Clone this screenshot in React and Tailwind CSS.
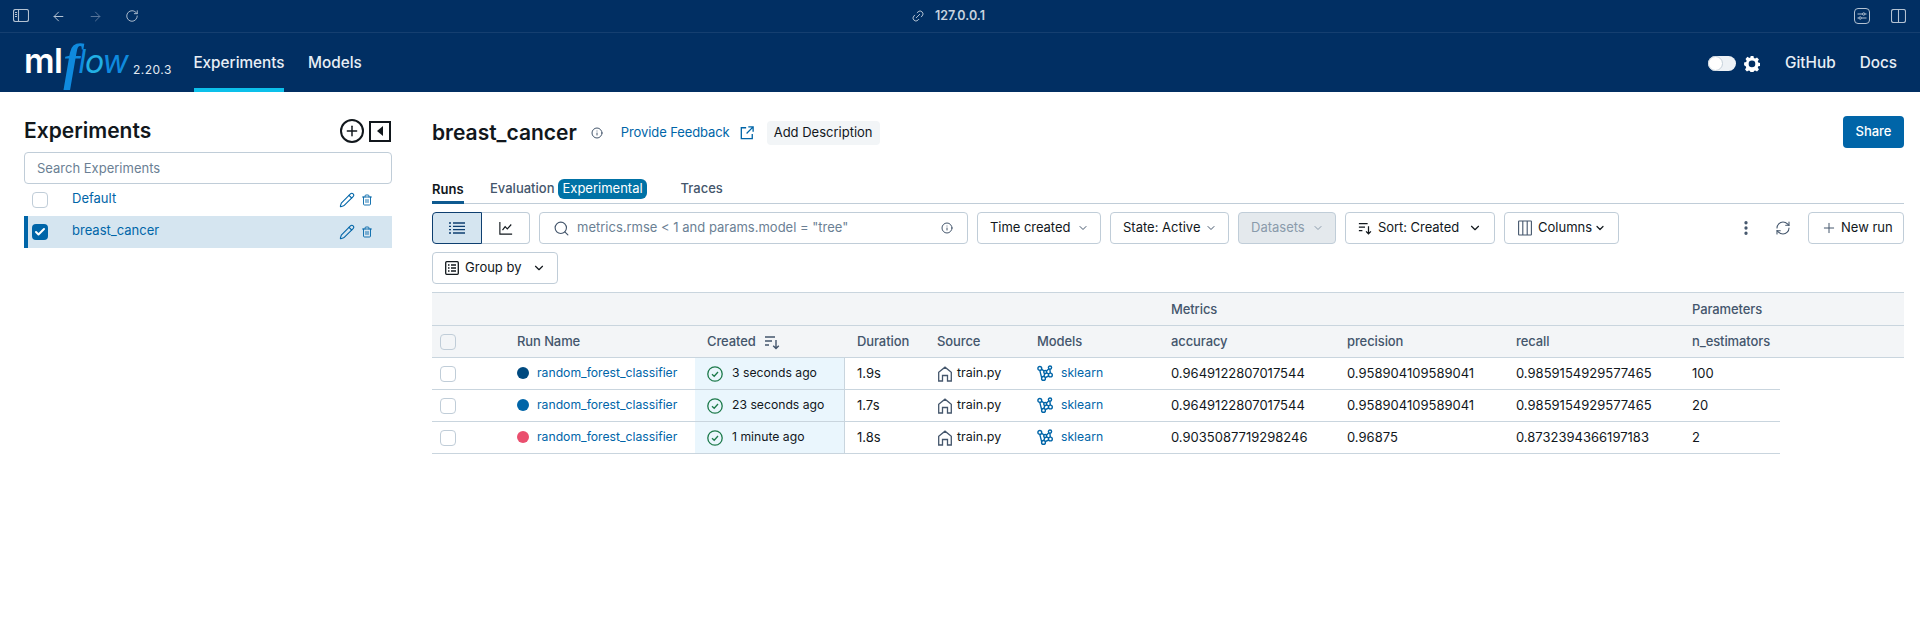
import {
  ArrowLeft, ArrowRight, RotateCw, Link2, Info, Search, ChevronDown, Pencil, Trash2, Plus,
  EllipsisVertical, RefreshCw, Check,
} from "lucide-react";

const rows = [
  {color: "bg-[#004a80]", ago: "3 seconds ago", dur: "1.9s", acc: "0.9649122807017544", prec: "0.958904109589041", rec: "0.9859154929577465", n: "100"},
  {color: "bg-[#0065a8]", ago: "23 seconds ago", dur: "1.7s", acc: "0.9649122807017544", prec: "0.958904109589041", rec: "0.9859154929577465", n: "20"},
  {color: "bg-[#ea4f6e]", ago: "1 minute ago", dur: "1.8s", acc: "0.9035087719298246", prec: "0.96875", rec: "0.8732394366197183", n: "2"},
];

function SortIcon({className}) {
  return <svg viewBox="0 0 16 16" fill="none" stroke="currentColor" strokeWidth="1.4" className={className}>
    <path d="M1 3h10M1 7h7M1 11h4M12 6v8.5M9.2 11.8l2.8 2.8 2.8-2.8"/>
  </svg>;
}

function ModelIcon() {
  return <svg viewBox="0 0 16 16" fill="none" stroke="#0065a8" strokeWidth="1.4" className="w-4 h-4 shrink-0">
    <circle cx="2.8" cy="3.4" r="1.9"/>
    <circle cx="13" cy="2.6" r="1.6"/>
    <circle cx="13.400" cy="10" r="1.9"/>
    <circle cx="6.500" cy="13.400" r="1.900"/>
    <circle cx="8.200" cy="7" r="1.500"/>
    <path d="M4.600 4.200l2.300 1.700M9.500 6l2.400-2.300M9.600 7.800l2.300 1.300M7.800 8.500l-.9 3M4.700 12.800L2.800 5.300M8.200 12.700l3.500-1.700M12.900 4.200l.4 3.900"/>
  </svg>;
}

function HomeIcon() {
  return <svg viewBox="0 0 16 16" fill="none" stroke="#44566c" strokeWidth="1.3" className="w-4 h-4 shrink-0">
    <path d="M1.700 15V6.200L8 1.200l6.300 5V15h-3.800V9.500H5.500V15z"/>
  </svg>;
}

function Btn({children, className = ""}) {
  return <div className={`h-8 flex items-center border border-[#c0cdd8] rounded text-[13px] text-[#11171c] bg-white ${className}`}>
    {children}
  </div>;
}

function Check2({checked}) {
  if (checked) {
    return <div className="w-4 h-4 rounded-[4px] bg-[#0065a8] flex items-center justify-center">
      <Check className="w-3 h-3 text-white" strokeWidth={4}/>
    </div>;
  }
  return <div className="w-4 h-4 rounded-[4px] border border-[#c0cdd8] bg-white"></div>;
}

function ExperimentRow({name, selected}) {
  return <div className={`h-8 flex items-center ${selected ? "bg-[#d5e5f0] border-l-4 border-[#0065a8] pl-1" : "pl-2"}`}>
    <Check2 checked={selected}/>
    <span className="ml-6 text-[13px] text-[#0065a8] -mt-[3px]">{name}</span>
    <div className="ml-auto flex items-center gap-[6px] pr-[19px] text-[#0065a8]">
      <Pencil className="w-4 h-4" strokeWidth={1.6}/>
      <Trash2 className="w-3 h-[14px]" strokeWidth={1.8}/>
    </div>
  </div>;
}

function HeadCell({width, children, className = ""}) {
  return <div className={`${width} px-3 flex items-center gap-2 text-[13px] font-medium tracking-[-0.1px] text-[#44566c] ${className}`}>{children}</div>;
}

export default function App() {
  return <div className="min-h-[637px] bg-white font-['Inter',sans-serif] text-[#11171c]">
    {/* safari bar */}
    <div className="h-[33px] bg-[#012f63] border-b border-[#153f70] relative flex items-center text-[#b4c2d2]">
      <div className="flex items-center pl-[13px]">
        <svg viewBox="0 0 16 14" fill="none" stroke="currentColor" strokeWidth="1.1" className="w-4 h-[14px]">
          <rect x="0.5" y="0.5" width="15" height="12" rx="2"/>
          <path d="M5.500 1v11M2 3.500h2M2 5.500h2M2 7.500h2"/>
        </svg>
        <ArrowLeft className="w-[15px] h-[15px] ml-[22px]" strokeWidth={1.6}/>
        <ArrowRight className="w-[15px] h-[15px] ml-[22px] text-[#58759a]" strokeWidth={1.6}/>
        <RotateCw className="w-[14px] h-[14px] ml-[22px]" strokeWidth={1.6}/>
      </div>
      <div className="absolute left-[911px] top-[7px] flex items-center gap-[10px]">
        <Link2 className="w-[14px] h-[14px] -rotate-45" strokeWidth={1.6}/>
        <span className="text-[12.500px] font-semibold text-[#c7d2df]">127.0.0.1</span>
      </div>
      <div className="ml-auto flex items-center pr-[14px] gap-[21px]">
        <svg viewBox="0 0 16 16" fill="none" stroke="currentColor" strokeWidth="1" className="w-4 h-4">
          <rect x="0.5" y="0.500" width="15" height="15" rx="3.500"/>
          <path d="M3.500 6h5M11 6h1.500M3.500 10h1.500M7.500 10h5"/>
          <circle cx="9.700" cy="6" r="1.200"/>
          <circle cx="6.200" cy="10" r="1.200"/>
        </svg>
        <svg viewBox="0 0 15 14" fill="none" stroke="currentColor" strokeWidth="1.100" className="w-[15px] h-[14px]">
          <rect x="0.500" y="0.500" width="14" height="13" rx="2"/>
          <path d="M7.500 1v12"/>
        </svg>
      </div>
    </div>

    {/* nav */}
    <div className="h-[59px] bg-[#012f63] flex items-stretch pl-6 pr-[23px] text-white">
      <div className="w-[170px] flex items-center relative">
        <span className="text-[34px] font-semibold leading-none tracking-[-0.5px] mb-[3px]">ml</span>
        <span className="font-['Liberation_Serif'] text-[50px] italic font-bold leading-none text-[#0f8ade] ml-[1px] -mt-[2px]">f</span>
        <span className="text-[32px] italic leading-none text-[#0f8ade] mb-[2px] -ml-[2px] tracking-[-1px]">l<span className="text-[#22b0e4]">o</span>w</span>
        <span className="absolute left-[109px] top-[28px] text-[12px] text-[#e4ebf2] tracking-[0.5px]">2.20.3</span>
      </div>
      <div className="flex items-stretch gap-6 text-[15.300px] font-medium text-[#e8eef5]">
        <div className="w-[90px] flex items-center justify-center border-b-4 border-[#0cc0ea] pt-[6px]">Experiments</div>
        <div className="flex items-center pt-[2px]">Models</div>
      </div>
      <div className="ml-auto flex items-center gap-[24px] text-[15.300px] text-[#e8eef5] font-medium pt-[2px]">
        <div className="flex items-center gap-2">
          <div className="w-7 h-[15px] rounded-full bg-[#eef2f6] relative">
            <div className="absolute left-0 top-0 w-[15px] h-[15px] rounded-full bg-white border border-[#c5d0da]"></div>
          </div>
          <svg viewBox="0 0 16 16" className="w-4 h-4" fill="white">
            <path fillRule="evenodd" d="M6.500 0h3l.5 2.200 1.300.6 2-1.100 2 2.200-1.200 1.900.5 1.300 2.200.5v3l-2.200.5-.5 1.300 1.200 1.900-2 2.200-2-1.100-1.300.6-.5 2.200h-3l-.5-2.200-1.300-.6-2 1.100-2-2.200 1.200-1.900-.5-1.300L-.300 10V7l2.200-.5.5-1.300L1.200 3.300l2-2.200 2 1.100 1.300-.6zM8 5a3.500 3.500 0 100 7 3.500 3.500 0 000-7z" transform="scale(.95) translate(.4 -.2)"/>
          </svg>
        </div>
        <span className="ml-[1px]">GitHub</span>
        <span>Docs</span>
      </div>
    </div>

    <div className="flex">
      {/* sidebar */}
      <div className="w-[432px] shrink-0 pl-6 pr-[40px] pt-[21px]">
        <div className="flex items-center h-9 mb-[3px]">
          <h1 className="text-[21px] font-semibold">Experiments</h1>
          <div className="ml-auto flex items-center gap-[5px] pr-px text-[#11171c]">
            <div className="w-6 h-6 rounded-full border-2 border-[#11171c] flex items-center justify-center">
              <Plus className="w-4 h-4" strokeWidth={2.2}/>
            </div>
            <div className="w-[22px] h-[21px] border-2 border-[#11171c] flex items-center justify-center">
              <div className="w-0 h-0 border-y-[5px] border-y-transparent border-r-[6px] border-r-[#11171c]"></div>
            </div>
          </div>
        </div>
        <div className="h-8 border border-[#c0cdd8] rounded flex items-center px-3 text-[13px] text-[#6b7f94] pt-px">Search Experiments</div>
        <ExperimentRow name="Default"/>
        <ExperimentRow name="breast_cancer" selected/>
      </div>

      {/* main */}
      <div className="flex-1 pr-4">
        <div className="flex items-center h-8 mt-6">
          <h2 className="text-[21px] font-semibold mt-[2px]">breast_cancer</h2>
          <Info className="w-3 h-3 ml-[14px] mt-[2px] text-[#44566c]" strokeWidth={2}/>
          <span className="ml-[18px] mt-[2px] text-[13px] text-[#0065a8] tracking-[-0.1px]">Provide Feedback</span>
          <svg viewBox="0 0 16 16" fill="none" stroke="#0065a8" strokeWidth="1.500" className="w-[14px] h-[14px] ml-[10px] mt-[2px]">
            <path d="M7 2H1.500v12.500H14V9M9.500 1H15v5.500M15 1L7.500 8.500"/>
          </svg>
          <div className="ml-[13px] mt-[2px] h-6 w-[113px] justify-center rounded bg-[#f2f5f7] flex items-center text-[13px]">Add Description</div>
          <div className="ml-auto h-8 w-[61px] rounded bg-[#0065a8] text-white text-[13px] font-medium flex items-center justify-center">Share</div>
        </div>

        <div className="flex items-end h-[56px] border-b border-[#c0cdd8] mb-[8px] text-[13px] font-medium text-[#44566c]">
          <div className="h-[24px] w-8 text-[#11171c] font-semibold border-b-[3px] border-[#0e5a90] -mb-px">Runs</div>
          <div className="h-[24px] ml-[26px]">Evaluation</div>
          <div className="h-5 ml-1 mb-1 px-1 rounded-md bg-[#0072a6] text-white flex items-center font-normal">Experimental</div>
          <div className="h-[24px] ml-[34px]">Traces</div>
        </div>

        <div className="flex gap-[9px]">
          <div className="flex shrink-0">
            <div className="w-[50px] h-8 bg-[#d5e5f0] border border-[#0e3f70] rounded-l flex items-center justify-center">
              <svg viewBox="0 0 16 12" fill="none" stroke="#0e3f70" strokeWidth="1.300" className="w-4 h-3">
                <path d="M0 1h2M4 1h12M0 4.300h2M4 4.300h12M0 7.600h2M4 7.600h12M0 11h2M4 11h12"/>
              </svg>
            </div>
            <div className="w-[48px] h-8 border border-l-0 border-[#c0cdd8] rounded-r flex items-center justify-center">
              <svg viewBox="0 0 16 16" fill="none" stroke="#11171c" strokeWidth="1.300" className="w-[14px] h-[14px]">
                <path d="M1 1v14h14M4 10.500l3-4 2.500 2.500L14 4"/>
              </svg>
            </div>
          </div>
          <Btn className="w-[429px] pl-[13px] pr-3 shrink-0">
            <Search className="w-[17px] h-[17px] text-[#44566c] mr-[7px]" strokeWidth={1.600}/>
            <span className="text-[#6b7f94]">metrics.rmse &lt; 1 and params.model = "tree"</span>
            <Info className="w-3 h-3 ml-auto mr-[2px] text-[#44566c]" strokeWidth={2}/>
          </Btn>
          <Btn className="w-[124px] shrink-0 pl-3 justify-between pr-[11px] tracking-[-0.05px]">Time created <ChevronDown className="w-3 h-3 text-[#44566c]" strokeWidth={2}/></Btn>
          <Btn className="w-[119px] shrink-0 pl-3 justify-between pr-[11px]">State: Active <ChevronDown className="w-3 h-3 text-[#44566c]" strokeWidth={2}/></Btn>
          <Btn className="w-[98px] shrink-0 pl-3 justify-between pr-[11px] bg-[#e4e9ed]! text-[#8a9bab]!">Datasets <ChevronDown className="w-3 h-3 text-[#8a9bab]" strokeWidth={2}/></Btn>
          <Btn className="w-[150px] shrink-0 pl-3 justify-between pr-[12px] tracking-[-0.05px]">
            <span className="flex items-center gap-[6px]"><SortIcon className="w-[14px] h-[14px]"/>Sort: Created</span>
            <ChevronDown className="w-[14px] h-[14px]" strokeWidth={2}/>
          </Btn>
          <Btn className="w-[115px] shrink-0 pl-[13px] gap-[6px]">
            <svg viewBox="0 0 14 16" fill="none" stroke="#44566c" strokeWidth="1.100" className="w-[14px] h-4">
              <rect x="0.600" y="1" width="12.800" height="14" rx="0.500"/><path d="M4.800 1v14M9.200 1v14"/>
            </svg>
            <span className="flex items-center gap-[2px]">Columns <ChevronDown className="w-3 h-3" strokeWidth={2.400}/></span>
          </Btn>
          <div className="ml-auto flex items-center gap-[20px] text-[#44566c]">
            <EllipsisVertical className="w-[18px] h-[18px]" strokeWidth={2.400}/>
            <RefreshCw className="w-4 h-4" strokeWidth={1.600}/>
            <Btn className="w-[96px] pl-[12px] gap-1 -ml-[3px]"><Plus className="w-4 h-4 text-[#44566c]" strokeWidth={1.500}/>New run</Btn>
          </div>
        </div>

        <Btn className="w-[126px] mt-2 pl-3 gap-[6px]">
          <svg viewBox="0 0 14 14" fill="none" stroke="#11171c" strokeWidth="1.300" className="w-[14px] h-[14px]">
            <rect x="0.700" y="0.700" width="12.600" height="12.600" rx="1"/><path d="M3 4h1.500M6 4h5M3 7h1.500M6 7h5M3 10h1.500M6 10h5"/>
          </svg>
          Group by
          <ChevronDown className="w-[14px] h-[14px] ml-1" strokeWidth={2}/>
        </Btn>

        {/* table */}
        <div className="mt-2 border-t border-[#c9d5de]">
          <div className="h-[32px] bg-[#f3f5f7] flex items-center border-b border-[#c9d5de] box-content">
            <HeadCell width="w-[727px] shrink-0"></HeadCell>
            <HeadCell width="w-[521px] shrink-0 pt-[2px]">Metrics</HeadCell>
            <HeadCell width="w-[200px] pt-[2px]">Parameters</HeadCell>
          </div>
          <div className="h-[31px] bg-[#f3f5f7] flex items-center border-b border-[#c9d5de] box-content">
            <div className="w-[85px] pl-2 shrink-0"><div className="w-4 h-4 rounded-[4px] border border-[#c0cdd8]"></div></div>
            <HeadCell width="w-[178px] shrink-0 pl-0!">Run Name</HeadCell>
            <HeadCell width="w-[150px] shrink-0">Created <SortIcon className="w-4 h-4 text-[#44566c]"/></HeadCell>
            <HeadCell width="w-[80px] shrink-0">Duration</HeadCell>
            <HeadCell width="w-[100px] shrink-0">Source</HeadCell>
            <HeadCell width="w-[134px] shrink-0">Models</HeadCell>
            <HeadCell width="w-[176px] shrink-0">accuracy</HeadCell>
            <HeadCell width="w-[169px] shrink-0">precision</HeadCell>
            <HeadCell width="w-[176px] shrink-0">recall</HeadCell>
            <HeadCell width="w-[100px] shrink-0">n_estimators</HeadCell>
          </div>
          {rows.map((row, i) => <div key={i} className="h-8 w-[1348px] flex items-center border-b border-[#c9d5de] text-[13px]">
            <div className="w-[85px] pl-2 shrink-0"><Check2/></div>
            <div className="w-[178px] shrink-0 flex items-center gap-2">
              <div className={`w-3 h-3 rounded-full ${row.color}`}></div>
              <span className="text-[#0065a8] text-[12.200px]">random_forest_classifier</span>
            </div>
            <div className="w-[150px] h-full shrink-0 bg-[#eaf6fd] border-r border-[#c9d5de] pl-3 flex items-center gap-[9px] text-[12.200px]">
              <svg viewBox="0 0 16 16" fill="none" stroke="#1d7a4b" strokeWidth="1.300" className="w-4 h-4">
                <circle cx="8" cy="8" r="7.200"/><path d="M5 8.200l2.200 2.100L11 6"/>
              </svg>
              {row.ago}
            </div>
            <div className="w-[80px] shrink-0 pl-3">{row.dur}</div>
            <div className="w-[100px] shrink-0 pl-3 flex items-center gap-1 text-[12.500px]"><HomeIcon/>train.py</div>
            <div className="w-[134px] shrink-0 pl-3 flex items-center gap-2 text-[#0065a8] text-[12.200px]"><ModelIcon/>sklearn</div>
            <div className="w-[176px] shrink-0 pl-3">{row.acc}</div>
            <div className="w-[169px] shrink-0 pl-3">{row.prec}</div>
            <div className="w-[176px] shrink-0 pl-3">{row.rec}</div>
            <div className="w-[100px] shrink-0 pl-3">{row.n}</div>
          </div>)}
        </div>
      </div>
    </div>
  </div>;
}
